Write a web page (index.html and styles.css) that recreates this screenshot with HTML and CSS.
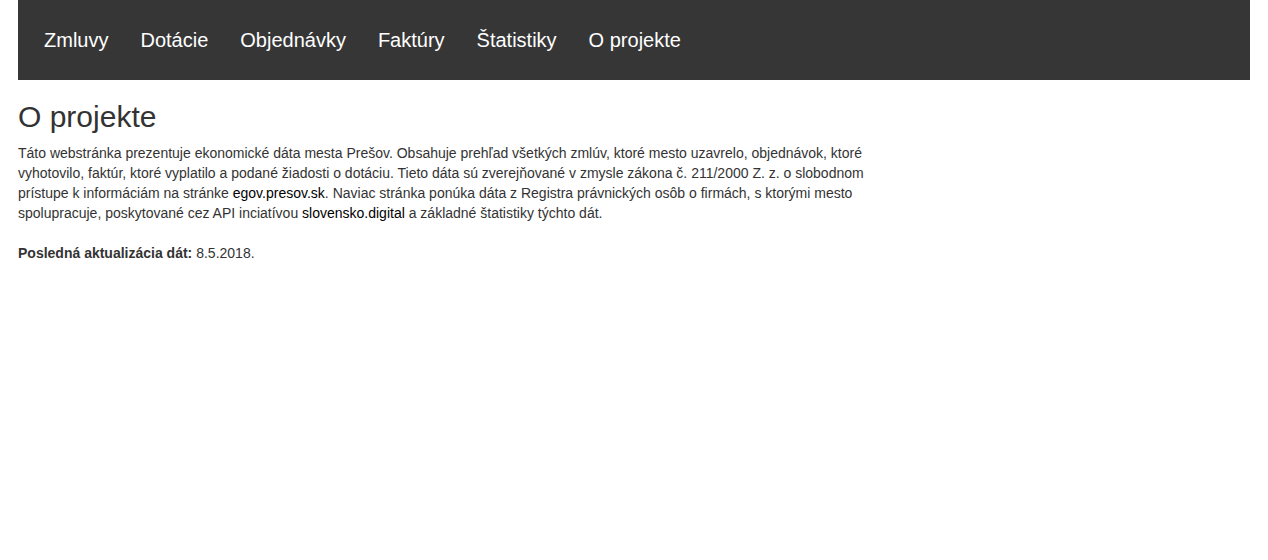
FILE: index.html
```html
<!DOCTYPE html>
<html lang="sk">
<head>
<meta charset="utf-8">
<title>O projekte</title>
<link rel="stylesheet" href="styles.css">
</head>
<body>
<div class="page">
  <nav class="navbar">
    <a class="nav-link" href="#">Zmluvy</a>
    <a class="nav-link" href="#">Dotácie</a>
    <a class="nav-link" href="#">Objednávky</a>
    <a class="nav-link" href="#">Faktúry</a>
    <a class="nav-link" href="#">Štatistiky</a>
    <a class="nav-link" href="#">O projekte</a>
  </nav>
  <main class="content">
    <h1 class="title">O projekte</h1>
    <p class="text">Táto webstránka prezentuje ekonomické dáta mesta Prešov. Obsahuje prehľad všetkých zmlúv, ktoré mesto uzavrelo, objednávok, ktoré vyhotovilo, faktúr, ktoré vyplatilo a podané žiadosti o dotáciu. Tieto dáta sú zverejňované v zmysle zákona č. 211/2000 Z. z. o slobodnom prístupe k informáciám na stránke <a class="link" href="#">egov.presov.sk</a>. Naviac stránka ponúka dáta z Registra právnických osôb o firmách, s ktorými mesto spolupracuje, poskytované cez API inciatívou <a class="link" href="#">slovensko.digital</a> a základné štatistiky týchto dát.</p>
    <p class="text updated"><strong>Posledná aktualizácia dát:</strong> 8.5.2018.</p>
  </main>
</div>
</body>
</html>
```
FILE: styles.css
```css
html, body {
  margin: 0;
  padding: 0;
  background: #fff;
}
body {
  font-family: "Liberation Sans", Arial, sans-serif;
  font-size: 14px;
  line-height: 20px;
  color: #333;
}
.page {
  padding: 0 18px;
}
.navbar {
  display: flex;
  align-items: center;
  height: 80px;
  padding: 0 10px;
  background: #363636;
}
.nav-link {
  display: block;
  padding: 0 16px;
  font-size: 20px;
  line-height: 80px;
  color: #fff;
  text-decoration: none;
}
.content {
  max-width: 860px;
}
.title {
  margin: 20px 0 10px;
  font-size: 30px;
  font-weight: 500;
  line-height: 33px;
  color: #333;
}
.text {
  margin: 0;
}
.updated {
  margin-top: 20px;
}
.link {
  color: #000;
  text-decoration: none;
}
```
